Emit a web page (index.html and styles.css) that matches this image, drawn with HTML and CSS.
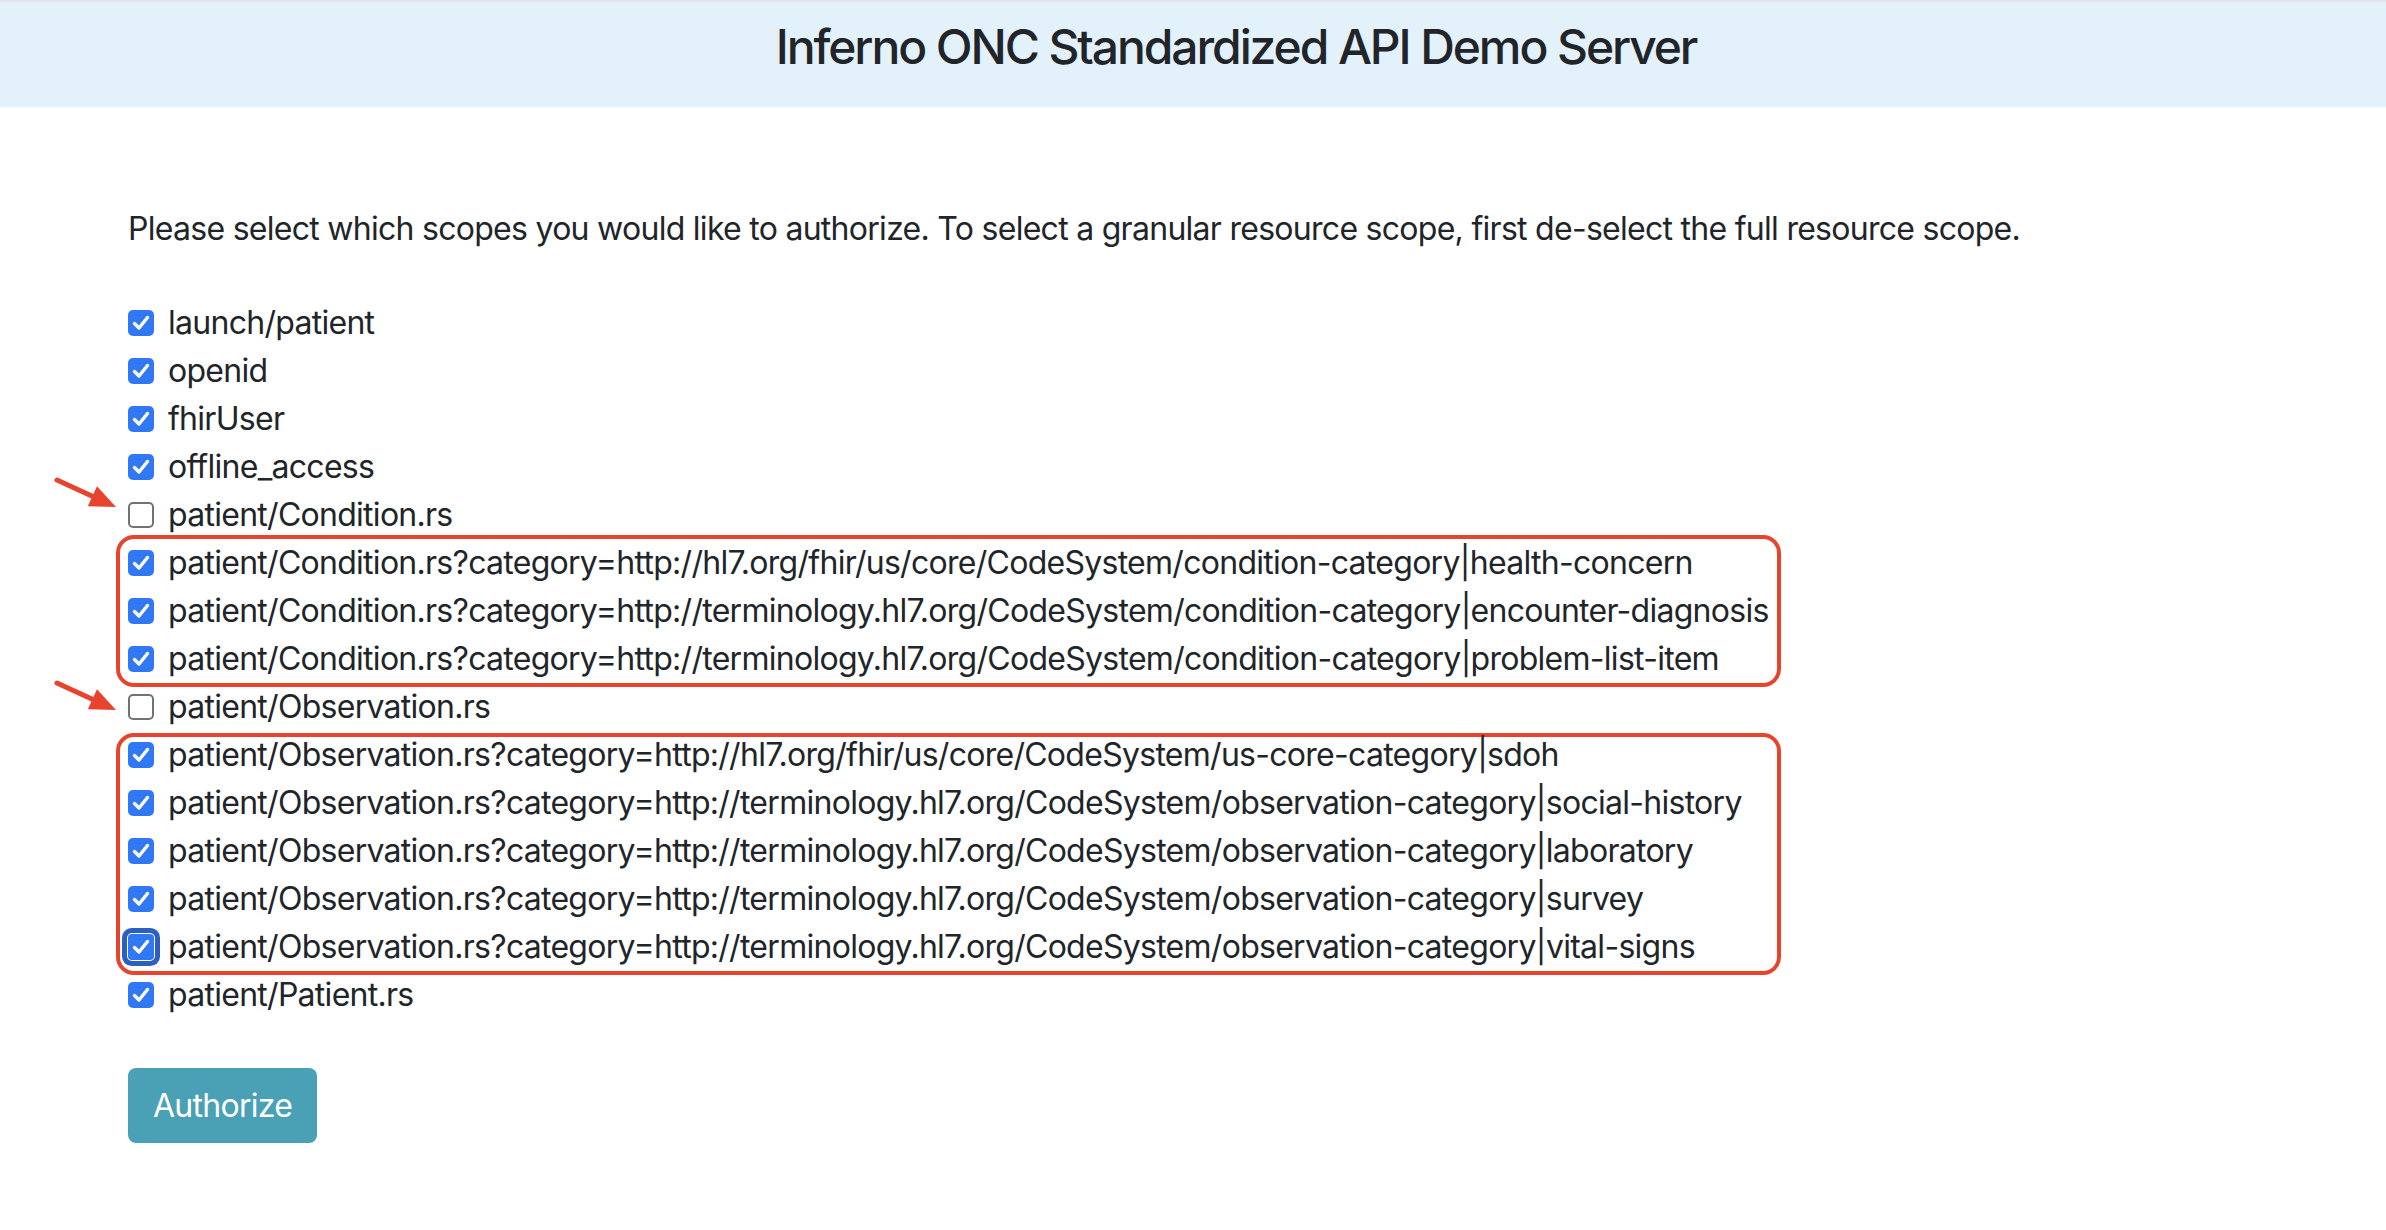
FILE: index.html
```html
<!DOCTYPE html>
<html lang="en">
<head>
<meta charset="utf-8">
<title>Inferno ONC Standardized API Demo Server</title>
<link rel="stylesheet" href="styles.css">
</head>
<body>
<header class="topbar">
  <h1 class="title">Inferno ONC Standardized API Demo Server</h1>
</header>
<main class="content">
  <p class="intro">Please select which scopes you would like to authorize. To select a granular resource scope, first de-select the full resource scope.</p>
  <form class="scopes">
    <div class="row"><span class="cb on"><svg viewBox="0 0 26 26"><path d="M6.5 13.5 L11 18 L19.5 7.5"/></svg></span><span class="lbl">launch/patient</span></div>
    <div class="row"><span class="cb on"><svg viewBox="0 0 26 26"><path d="M6.5 13.5 L11 18 L19.5 7.5"/></svg></span><span class="lbl">openid</span></div>
    <div class="row"><span class="cb on"><svg viewBox="0 0 26 26"><path d="M6.5 13.5 L11 18 L19.5 7.5"/></svg></span><span class="lbl">fhirUser</span></div>
    <div class="row"><span class="cb on"><svg viewBox="0 0 26 26"><path d="M6.5 13.5 L11 18 L19.5 7.5"/></svg></span><span class="lbl">offline_access</span></div>
    <div class="row marked">
      <svg class="arrow arrow-a" viewBox="0 0 66 34"><path class="shaft" d="M3 3 L40 20"/><polygon points="62,30 33.8,29.2 43,9.2"/></svg>
      <span class="cb"></span><span class="lbl">patient/Condition.rs</span>
    </div>
    <div class="group group-a">
      <div class="row"><span class="cb on"><svg viewBox="0 0 26 26"><path d="M6.5 13.5 L11 18 L19.5 7.5"/></svg></span><span class="lbl">patient/Condition.rs?category=http://hl7.org/fhir/us/core/CodeSystem/condition-category|health-concern</span></div>
      <div class="row"><span class="cb on"><svg viewBox="0 0 26 26"><path d="M6.5 13.5 L11 18 L19.5 7.5"/></svg></span><span class="lbl">patient/Condition.rs?category=http://terminology.hl7.org/CodeSystem/condition-category|encounter-diagnosis</span></div>
      <div class="row"><span class="cb on"><svg viewBox="0 0 26 26"><path d="M6.5 13.5 L11 18 L19.5 7.5"/></svg></span><span class="lbl">patient/Condition.rs?category=http://terminology.hl7.org/CodeSystem/condition-category|problem-list-item</span></div>
    </div>
    <div class="row marked">
      <svg class="arrow arrow-b" viewBox="0 0 66 34"><path class="shaft" d="M3 3 L40 20"/><polygon points="62,30 33.8,29.2 43,9.2"/></svg>
      <span class="cb"></span><span class="lbl">patient/Observation.rs</span>
    </div>
    <div class="group group-b">
      <div class="row"><span class="cb on"><svg viewBox="0 0 26 26"><path d="M6.5 13.5 L11 18 L19.5 7.5"/></svg></span><span class="lbl">patient/Observation.rs?category=http://hl7.org/fhir/us/core/CodeSystem/us-core-category|sdoh</span></div>
      <div class="row"><span class="cb on"><svg viewBox="0 0 26 26"><path d="M6.5 13.5 L11 18 L19.5 7.5"/></svg></span><span class="lbl">patient/Observation.rs?category=http://terminology.hl7.org/CodeSystem/observation-category|social-history</span></div>
      <div class="row"><span class="cb on"><svg viewBox="0 0 26 26"><path d="M6.5 13.5 L11 18 L19.5 7.5"/></svg></span><span class="lbl">patient/Observation.rs?category=http://terminology.hl7.org/CodeSystem/observation-category|laboratory</span></div>
      <div class="row"><span class="cb on"><svg viewBox="0 0 26 26"><path d="M6.5 13.5 L11 18 L19.5 7.5"/></svg></span><span class="lbl">patient/Observation.rs?category=http://terminology.hl7.org/CodeSystem/observation-category|survey</span></div>
      <div class="row"><span class="cb on focus"><svg viewBox="0 0 26 26"><path d="M6.5 13.5 L11 18 L19.5 7.5"/></svg></span><span class="lbl">patient/Observation.rs?category=http://terminology.hl7.org/CodeSystem/observation-category|vital-signs</span></div>
    </div>
    <div class="row"><span class="cb on"><svg viewBox="0 0 26 26"><path d="M6.5 13.5 L11 18 L19.5 7.5"/></svg></span><span class="lbl">patient/Patient.rs</span></div>
    <button type="button" class="btn">Authorize</button>
  </form>
</main>
</body>
</html>
```

FILE: styles.css
```css
html, body {
  margin: 0;
  padding: 0;
  background: #ffffff;
}

body {
  font-family: Inter, "Noto Sans", "Liberation Sans", sans-serif;
  color: #212529;
  font-size: 32px;
  line-height: 48px;
  letter-spacing: -0.72px;
}

.topbar {
  border-top: 2px solid #e2e5e9;
  background: #e3f1fb;
  padding: 16px 0 31px 86px;
  text-align: center;
}

.title {
  margin: 0;
  font-size: 48px;
  font-weight: 500;
  line-height: 58px;
  letter-spacing: -2.1px;
  color: #212529;
}

.content {
  padding: 0 0 0 128px;
}

.intro {
  margin: 98px 0 46px 0;
}

.scopes {
  display: flex;
  flex-direction: column;
  align-items: flex-start;
}

.row {
  position: relative;
  display: flex;
  align-items: center;
  gap: 14px;
  height: 48px;
  white-space: nowrap;
}

.cb {
  flex: none;
  position: relative;
  width: 26px;
  height: 26px;
  box-sizing: border-box;
  border: 2px solid #727272;
  border-radius: 5px;
  background: #ffffff;
}

.cb.on {
  border: none;
  background: #3078f4;
}

.cb svg {
  display: block;
  width: 26px;
  height: 26px;
}

.cb svg path {
  fill: none;
  stroke: #ffffff;
  stroke-width: 3.4;
  stroke-linecap: round;
  stroke-linejoin: round;
}

.cb.focus {
  box-shadow: 0 0 0 1px #ffffff, 0 0 0 6px #2b5fc2;
  border-radius: 4px;
}

.group {
  position: relative;
  display: flex;
  flex-direction: column;
}

.group::before {
  content: "";
  position: absolute;
  left: -12px;
  width: 1665px;
  box-sizing: border-box;
  border: 4px solid #e8432d;
  border-radius: 18px;
  pointer-events: none;
}

.group-a::before {
  top: -4px;
  bottom: -4px;
}

.group-b::before {
  top: 2px;
  bottom: -4px;
}

.arrow {
  position: absolute;
  left: -74px;
  width: 66px;
  height: 34px;
  overflow: visible;
}

.arrow-a {
  top: -14px;
}

.arrow-b {
  top: -3px;
}

.arrow .shaft {
  stroke: #e8432d;
  stroke-width: 5;
  stroke-linecap: round;
  fill: none;
}

.arrow polygon {
  fill: #e8432d;
}

.btn {
  margin-top: 49px;
  font-family: inherit;
  font-size: 32px;
  line-height: 48px;
  letter-spacing: -0.72px;
  color: #ffffff;
  background: #4aa1b6;
  border: none;
  border-radius: 8px;
  padding: 13.5px 25px;
  cursor: pointer;
}
```
